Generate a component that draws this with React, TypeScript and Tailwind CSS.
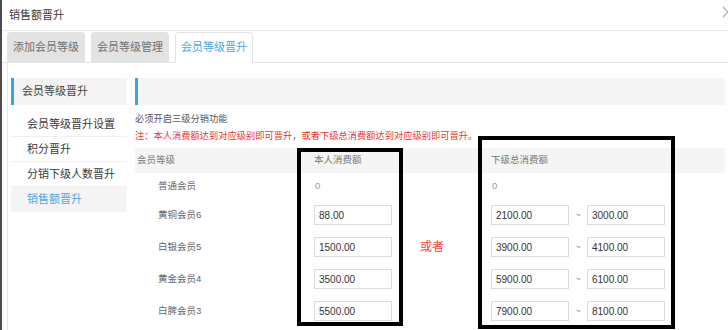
import React from "react";

const tabs = ["添加会员等级", "会员等级管理", "会员等级晋升"];
const menu = ["会员等级晋升设置", "积分晋升", "分销下级人数晋升", "销售额晋升"];

const levels = [
  { name: "黄铜会员6", self: "88.00", from: "2100.00", to: "3000.00" },
  { name: "白银会员5", self: "1500.00", from: "3900.00", to: "4100.00" },
  { name: "黄金会员4", self: "3500.00", from: "5900.00", to: "6100.00" },
  { name: "白脾会员3", self: "5500.00", from: "7900.00", to: "8100.00" },
];

function Field({ value }: { value: string }) {
  return (
    <input
      readOnly
      defaultValue={value}
      className="w-[78px] h-[20px] border border-[#dcdcdc] px-[4px] text-[10px] text-[#333] outline-none"
    />
  );
}

export default function App() {
  return (
    <div className="relative w-[728px] h-[330px] overflow-hidden bg-white border-l-2 border-[#4d4d4d] font-['Liberation_Sans','Noto_Sans_CJK_SC',sans-serif]">
      {/* title */}
      <div className="h-[31px] flex items-center pl-[7px] text-[11px] text-[#3a3a3a] border-b border-[#ececec]">
        销售额晋升
      </div>
      <svg className="absolute left-[720px] top-[6px] w-[12px] h-[12px]" viewBox="0 0 12 12">
        <path d="M1 1 L11 11 M11 1 L1 11" stroke="#aaa" strokeWidth="1.2" fill="none" />
      </svg>

      {/* tabs */}
      <div className="h-[32px] flex items-end gap-[6px] pl-[5px] border-b border-[#e4e4e4]">
        {tabs.map((t, i) =>
          i === 2 ? (
            <div
              key={t}
              className="w-[78px] h-[31px] -mb-px rounded-t-[4px] bg-white border border-[#e4e4e4] border-b-white flex items-center justify-center text-[11px] text-[#4aa9e6]"
            >
              {t}
            </div>
          ) : (
            <div
              key={t}
              className="w-[78px] h-[30px] rounded-t-[4px] bg-[#e3e3e3] flex items-center justify-center text-[11px] text-[#707070]"
            >
              {t}
            </div>
          )
        )}
      </div>

      {/* content */}
      <div className="flex gap-[8px] ml-[5px] h-[270px] border-l border-[#e4e4e4] pl-[3px] pt-[15px]">
        {/* sidebar */}
        <div className="w-[116px] shrink-0">
          <div className="h-[27px] flex items-center pl-[8px] bg-[#f4f4f4] border-l-[3px] border-[#3aa3e3] text-[11px] text-[#444]">
            会员等级晋升
          </div>
          <ul className="mt-[7px]">
            {menu.map((m, i) =>
              i === menu.length - 1 ? (
                <li key={m} className="h-[25px] flex items-center pl-[16px] bg-[#f4f4f4] text-[11px] text-[#4aa9e6]">
                  {m}
                </li>
              ) : (
                <li key={m} className="h-[25px] flex items-center pl-[16px] border-b border-[#f0f0f0] text-[11px] text-[#3a3a3a]">
                  {m}
                </li>
              )
            )}
          </ul>
        </div>

        {/* main */}
        <div className="w-[590px] shrink-0">
          <div className="h-[27px] bg-[#f5f5f5] border-l-[3px] border-[#3aa3e3]" />
          <p className="mt-[6px] leading-[16px] text-[9.25px] text-[#555]">必须开启三级分销功能</p>
          <p className="mt-[1px] leading-[16px] text-[9.25px] text-[#f03030]">
            注：本人消费额达到对应级别即可晋升，或者下级总消费额达到对应级别即可晋升。
          </p>

          <div className="mt-[4px] text-[9.5px]">
            <div className="grid grid-cols-[179px_177px_1fr] h-[25px] items-center bg-[#f5f5f5] text-[#777]">
              <span className="pl-[2px]">会员等级</span>
              <span>本人消费额</span>
              <span>下级总消费额</span>
            </div>
            <div className="grid grid-cols-[179px_177px_1fr] h-[26px] items-center text-[#666]">
              <span className="pl-[23px]">普通会员</span>
              <span className="pl-[1px] text-[#999]">0</span>
              <span className="pl-[1px] text-[#999]">0</span>
            </div>
            {levels.map((l, i) => (
              <div key={l.name} className="grid grid-cols-[179px_177px_1fr] h-[32px] items-center text-[#666]">
                <span className="pl-[23px]">{l.name}</span>
                <div className="flex items-center">
                  <Field value={l.self} />
                  {i === 1 && <span className="ml-[28px] text-[12px] text-[#f04a4a]">或者</span>}
                </div>
                <div className="flex items-center">
                  <Field value={l.from} />
                  <span className="w-[18px] text-center text-[#999]">~</span>
                  <Field value={l.to} />
                </div>
              </div>
            ))}
          </div>
        </div>
      </div>

      {/* annotation boxes */}
      <div className="absolute left-[295px] top-[148px] w-[106px] h-[178px] border-4 border-black" />
      <div className="absolute left-[476px] top-[136px] w-[197px] h-[193px] border-4 border-black" />
    </div>
  );
}
